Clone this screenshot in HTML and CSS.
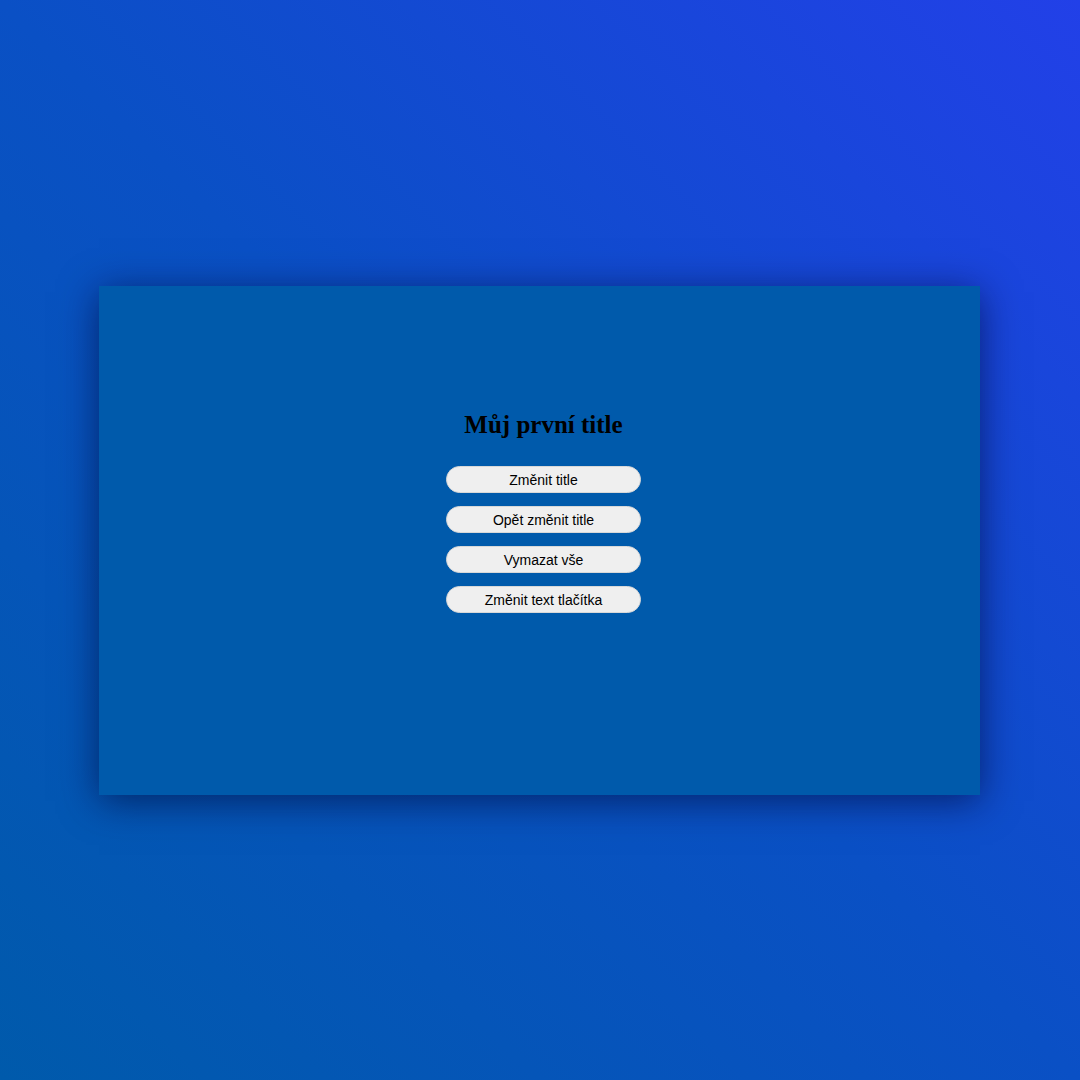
FILE: index.html
```html
<!DOCTYPE html>
<html lang="cs">
<head>
<meta charset="utf-8">
<title>Můj první title</title>
<link rel="stylesheet" href="styles.css">
</head>
<body>
<main class="card">
  <h1 class="title">Můj první title</h1>
  <div class="buttons">
    <button class="btn">Změnit title</button>
    <button class="btn">Opět změnit title</button>
    <button class="btn">Vymazat vše</button>
    <button class="btn">Změnit text tlačítka</button>
  </div>
</main>
</body>
</html>
```
FILE: styles.css
```css
html, body {
  margin: 0;
  height: 100%;
}
body {
  width: 1080px;
  height: 1080px;
  background: linear-gradient(to top right, #005aab 0%, #0a50c5 50%, #2240e8 100%);
  display: flex;
  align-items: center;
  justify-content: center;
}
.card {
  width: 881px;
  height: 509px;
  margin-left: -1px;
  margin-top: 1px;
  box-sizing: border-box;
  background: #005aab;
  box-shadow: 0 6px 36px rgba(0, 10, 60, 0.65);
  display: flex;
  flex-direction: column;
  align-items: center;
  padding-top: 124px;
  padding-left: 8px;
}
.title {
  margin: 0;
  font-family: "Liberation Serif", "Times New Roman", serif;
  font-size: 25px;
  font-weight: bold;
  color: #000;
  line-height: 30px;
}
.buttons {
  display: flex;
  flex-direction: column;
  gap: 13px;
  margin-top: 26px;
}
.btn {
  width: 195px;
  height: 27px;
  border-radius: 14px;
  border: 1px solid #d8d8d8;
  background: #efefef;
  color: #000;
  font-family: "Liberation Sans", Arial, sans-serif;
  font-size: 14px;
  padding: 0;
}
```
